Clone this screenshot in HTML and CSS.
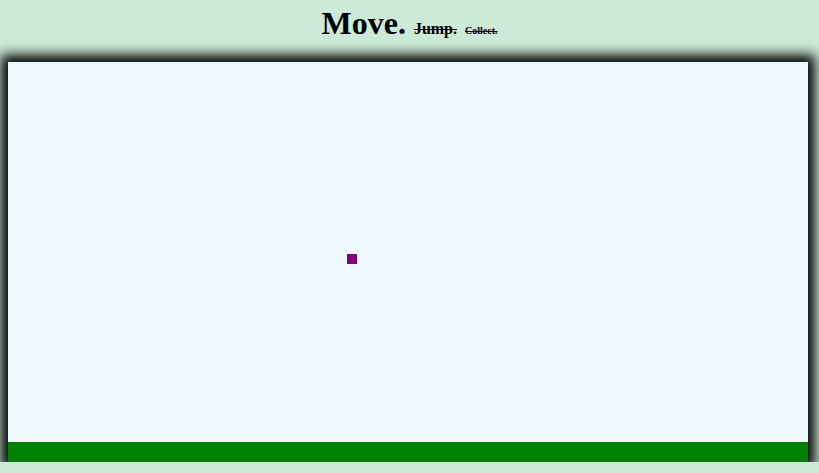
FILE: index.html
```html
<!DOCTYPE html>
<html>
<head>
<meta charset="utf-8">
<link rel="stylesheet" href="styles.css">
</head>
<body>
<h1 class="title">Move. <s class="jump">Jump.</s> <s class="collect">Collect.</s></h1>
<div class="game">
  <div class="world">
    <div class="player"></div>
  </div>
  <div class="floor"></div>
</div>
</body>
</html>
```
FILE: styles.css
```css
html, body {
  margin: 0;
  background: #cdead8;
}
body {
  padding: 0 8px;
  font-family: "Liberation Serif", "Times New Roman", serif;
}
.title {
  margin: 0;
  height: 54px;
  padding-top: 3px;
  box-sizing: border-box;
  text-align: center;
  font-size: 32px;
  line-height: 40px;
  font-weight: bold;
}
.jump {
  font-size: 16px;
}
.collect {
  font-size: 10px;
}
.game {
  width: 800px;
  height: 400px;
  background: #f0f8ff;
  box-shadow: 0 0 12px 7px #000;
  display: flex;
  flex-direction: column;
  margin-top: 8px;
}
.world {
  flex: 1;
  position: relative;
}
.player {
  position: absolute;
  left: 339px;
  top: 192px;
  width: 10px;
  height: 10px;
  background: #800080;
}
.floor {
  height: 20px;
  background: #008000;
}
```
